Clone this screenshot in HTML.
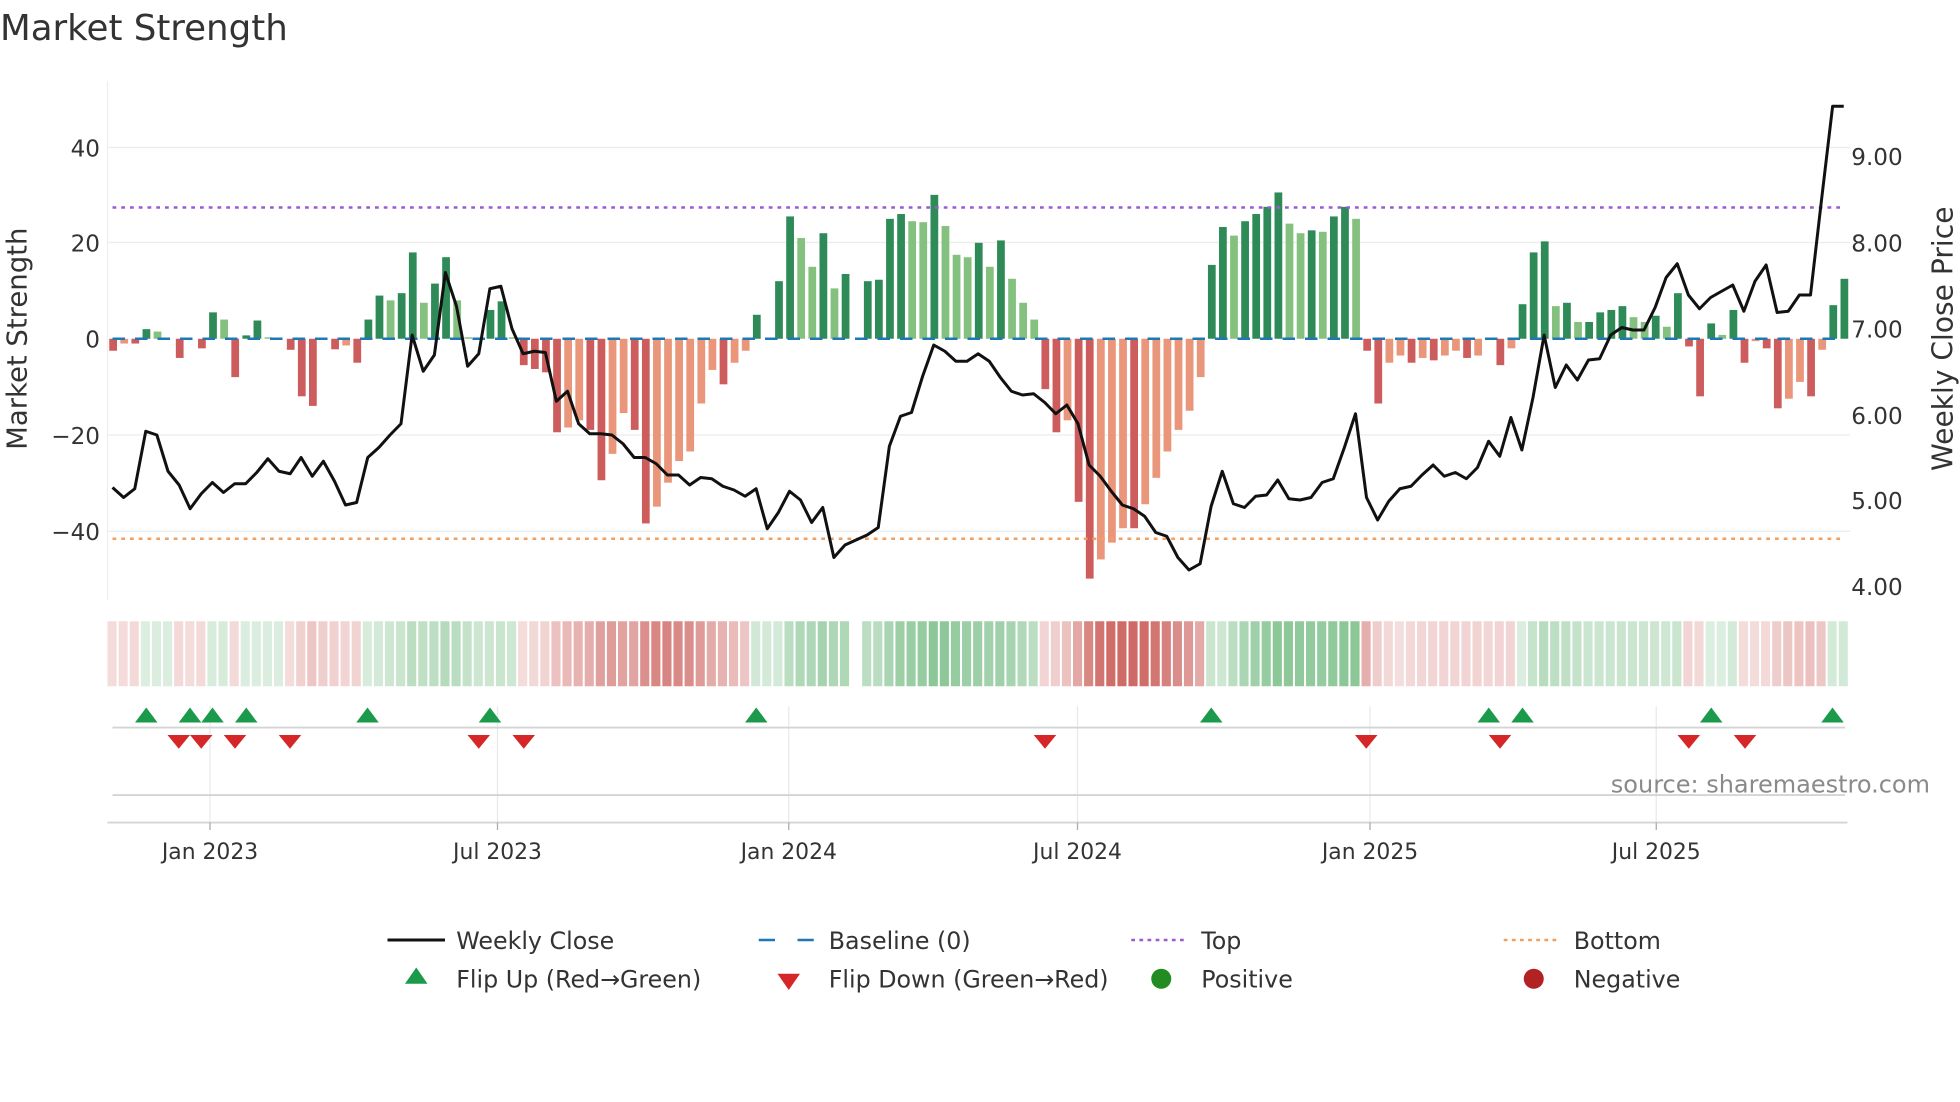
<!DOCTYPE html>
<html><head><meta charset="utf-8"><style>
html,body{margin:0;padding:0;background:#fff;}
svg{display:block;}
text{font-family:"DejaVu Sans","Liberation Sans",sans-serif;fill:#333;}
</style></head><body>
<svg id="s" width="1960" height="1102" viewBox="0 0 1568 881.6" preserveAspectRatio="none" xmlns="http://www.w3.org/2000/svg">
<text x="0" y="32" font-size="28.5">Market Strength</text>
<g stroke="#ececec" stroke-width="1">
<line x1="86" y1="118" x2="1480" y2="118"/><line x1="86" y1="194" x2="1480" y2="194"/>
<line x1="86" y1="348" x2="1480" y2="348"/><line x1="86" y1="425" x2="1480" y2="425"/>
</g>
<line x1="86" y1="65" x2="86" y2="480" stroke="#eee" stroke-width="1"/>
<g font-size="18.5" text-anchor="end">
<text x="80" y="125">40</text><text x="80" y="201">20</text><text x="80" y="278">0</text>
<text x="80" y="355">−20</text><text x="80" y="432">−40</text>
</g>
<g font-size="18.5">
<text x="1481" y="132">9.00</text><text x="1481" y="201">8.00</text><text x="1481" y="270">7.00</text>
<text x="1481" y="339">6.00</text><text x="1481" y="407">5.00</text><text x="1481" y="476">4.00</text>
</g>
<text transform="translate(21,271) rotate(-90)" font-size="22" text-anchor="middle">Market Strength</text>
<text transform="translate(1562,271) rotate(-90)" font-size="22.5" text-anchor="middle">Weekly Close Price</text>
<g id="bars"></g>
<line x1="90" y1="271" x2="1476" y2="271" stroke="#1f77b4" stroke-width="2" stroke-dasharray="10,8"/>
<line x1="90" y1="166" x2="1476" y2="166" stroke="#9b59d6" stroke-width="2" stroke-dasharray="3,4"/>
<line x1="90" y1="431" x2="1476" y2="431" stroke="#f0a060" stroke-width="2" stroke-dasharray="3,4"/>
<polyline id="price" fill="none" stroke="#111" stroke-width="2.4" stroke-linejoin="round"/>
<g id="heat"></g>
<g stroke="#e6e9ee" stroke-width="1">
<line x1="168" y1="565" x2="168" y2="658"/><line x1="398" y1="565" x2="398" y2="658"/>
<line x1="631" y1="565" x2="631" y2="658"/><line x1="862" y1="565" x2="862" y2="658"/>
<line x1="1096" y1="565" x2="1096" y2="658"/><line x1="1325" y1="565" x2="1325" y2="658"/>
</g>
<line x1="90" y1="582" x2="1476" y2="582" stroke="#d4d4d4" stroke-width="1.5"/>
<line x1="90" y1="636" x2="1476" y2="636" stroke="#d4d4d4" stroke-width="1.5"/>
<line x1="86" y1="658" x2="1478" y2="658" stroke="#d4d4d4" stroke-width="1.5"/>
<g stroke="#aaa" stroke-width="1">
<line x1="168" y1="658" x2="168" y2="664"/><line x1="398" y1="658" x2="398" y2="664"/>
<line x1="631" y1="658" x2="631" y2="664"/><line x1="862" y1="658" x2="862" y2="664"/>
<line x1="1096" y1="658" x2="1096" y2="664"/><line x1="1325" y1="658" x2="1325" y2="664"/>
</g>
<g id="flips"></g>
<text x="1544" y="634" font-size="19.2" text-anchor="end" style="fill:#8a8a8a">source: sharemaestro.com</text>
<g font-size="17.5" text-anchor="middle">
<text x="168" y="687">Jan 2023</text><text x="398" y="687">Jul 2023</text><text x="631" y="687">Jan 2024</text>
<text x="862" y="687">Jul 2024</text><text x="1096" y="687">Jan 2025</text><text x="1325" y="687">Jul 2025</text>
</g>
<g font-size="19">
<line x1="310" y1="752" x2="356" y2="752" stroke="#111" stroke-width="2.4"/>
<text x="365" y="759">Weekly Close</text>
<line x1="607" y1="752" x2="651" y2="752" stroke="#1f77b4" stroke-width="2" stroke-dasharray="13,18"/>
<text x="663" y="759">Baseline (0)</text>
<line x1="905" y1="752" x2="949" y2="752" stroke="#9b59d6" stroke-width="2" stroke-dasharray="3,3.5"/>
<text x="961" y="759">Top</text>
<line x1="1203" y1="752" x2="1247" y2="752" stroke="#f0a060" stroke-width="2" stroke-dasharray="3,3.5"/>
<text x="1259" y="759">Bottom</text>
<polygon points="333,774 342,787 324,787" fill="#1a9a4a"/>
<text x="365" y="790">Flip Up (Red→Green)</text>
<polygon points="622,779 640,779 631,792" fill="#d62728"/>
<text x="663" y="790">Flip Down (Green→Red)</text>
<circle cx="929" cy="783" r="8" fill="#228b22"/>
<text x="961" y="790">Positive</text>
<circle cx="1227" cy="783" r="8" fill="#b22222"/>
<text x="1259" y="790">Negative</text>
</g>
</svg>
<script>
var NS="http://www.w3.org/2000/svg";
function el(t,a,p){var e=document.createElementNS(NS,t);for(var k in a)e.setAttribute(k,a[k]);p.appendChild(e);return e;}
var v=[-2.5,-1,-1,2,1.5,0,-4,0,-2,5.5,4,-8,0.7,3.8,0.3,0,-2.3,-12,-14,0,-2.2,-1.4,-5,4,9,8,9.5,18,7.5,11.5,17,8,0.3,0,6,7.8,0.3,-5.5,-6.3,-7,
-19.5,-18.5,-17,-19,-29.5,-24,-15.5,-19,-38.5,-35,-30,-25.5,-23.5,-13.5,-6.5,-9.5,-5,-2.5,5,0,12,25.5,21,15,22,10.5,13.5,0,12,12.3,
25,26,24.5,24.3,30,23.5,17.5,17,20,15,20.5,12.5,7.5,4,-10.5,-19.5,-17,-34,-50,-46,-42.5,-39.5,-39.5,-34.5,-29,-23.5,-19,-15,-8,
15.4,23.3,21.5,24.5,26,27.5,30.5,24,22,22.6,22.3,25.5,27.5,25,-2.5,-13.5,-5,-3.5,-5,-4,-4.5,-3.5,-2.5,-4,-3.5,0,-5.5,-2,
7.2,18,20.3,6.8,7.5,3.5,3.5,5.5,6,6.8,4.5,3.5,4.8,2.5,9.5,-1.6,-12,3.2,0.8,6,-5,-0.5,-2,-14.5,-12.5,-9,-12,-2.3,7,12.5];
var n=v.length, step=(1475.5-90.5)/(n-1), Z=271, U=76.75/20;
var bars=document.getElementById('bars'), heat=document.getElementById('heat');
var ema=0,sg=-1;
for(var i=0;i<n;i++){
  var x=90.5+i*step, val=v[i], pv=i?v[i-1]:0, c;
  var dark=(val*pv<=0)||Math.abs(val)>=Math.abs(pv);
  if(val>=0)c=dark?'#2e8b57':'#85c17e';else c=dark?'#cd5c5c':'#e9967a';
  if(val!==0){var h=Math.abs(val)*U;el('rect',{x:x-3.1,y:val>0?Z-h:Z,width:6.2,height:h,fill:c},bars);}
  ema=ema*0.65+val*0.35; if(val!==0)sg=val>0?1:-1;
  if(i===67)continue;
  var a=Math.min(0.18+Math.abs(ema)/40*0.65,0.85);
  var col=sg>0?'rgba(60,160,80,'+a.toFixed(2)+')':'rgba(195,70,65,'+a.toFixed(2)+')';
  el('rect',{x:86+i*8.878,y:497,width:7.3,height:52,fill:col},heat);
}
var py=[390,398,391,345,348,377,388,407,395,386,394,387,387,378,367,377,379,366,381,369,385,404,402,366,358,348,339,268,297,284,218,245,293,283,231,229,263,283,281,282,321,313,339,347,347,348,355,366,366,371,380,380,388,382,383,389,392,397,391,423,410,393,400,418,406,446,436,432,428,422,357,333,330,301,276,281,289,289,283,289,302,313,316,315,322,331,324,339,372,381,393,404,407,413,426,429,446,456,451,405,377,403,406,397,396,384,399,400,398,386,383,358,331,398,416,401,391,389,380,372,381,378,383,374,353,365,334,360,318,268,310,292,304,288,287,268,262,264,264,246,222,211,236,247,238,233,228,249,225,212,250,249,236,236,160,85,85];
var pts=[],ps=(1475-90)/(py.length-1);
for(var k=0;k<py.length;k++)pts.push((90+k*ps).toFixed(1)+','+py[k]);
document.getElementById('price').setAttribute('points',pts.join(' '));
var fl=document.getElementById('flips');
[117,152,170,197,294,392,605,969,1191,1218,1369,1466].forEach(function(x){el('polygon',{points:x+',566 '+(x+9)+',578 '+(x-9)+',578',fill:'#1a9a4a'},fl);});
[143,161,188,232,383,419,836,1093,1200,1351,1396].forEach(function(x){el('polygon',{points:(x-9)+',588 '+(x+9)+',588 '+x+',599',fill:'#d62728'},fl);});
</script>
</body></html>
